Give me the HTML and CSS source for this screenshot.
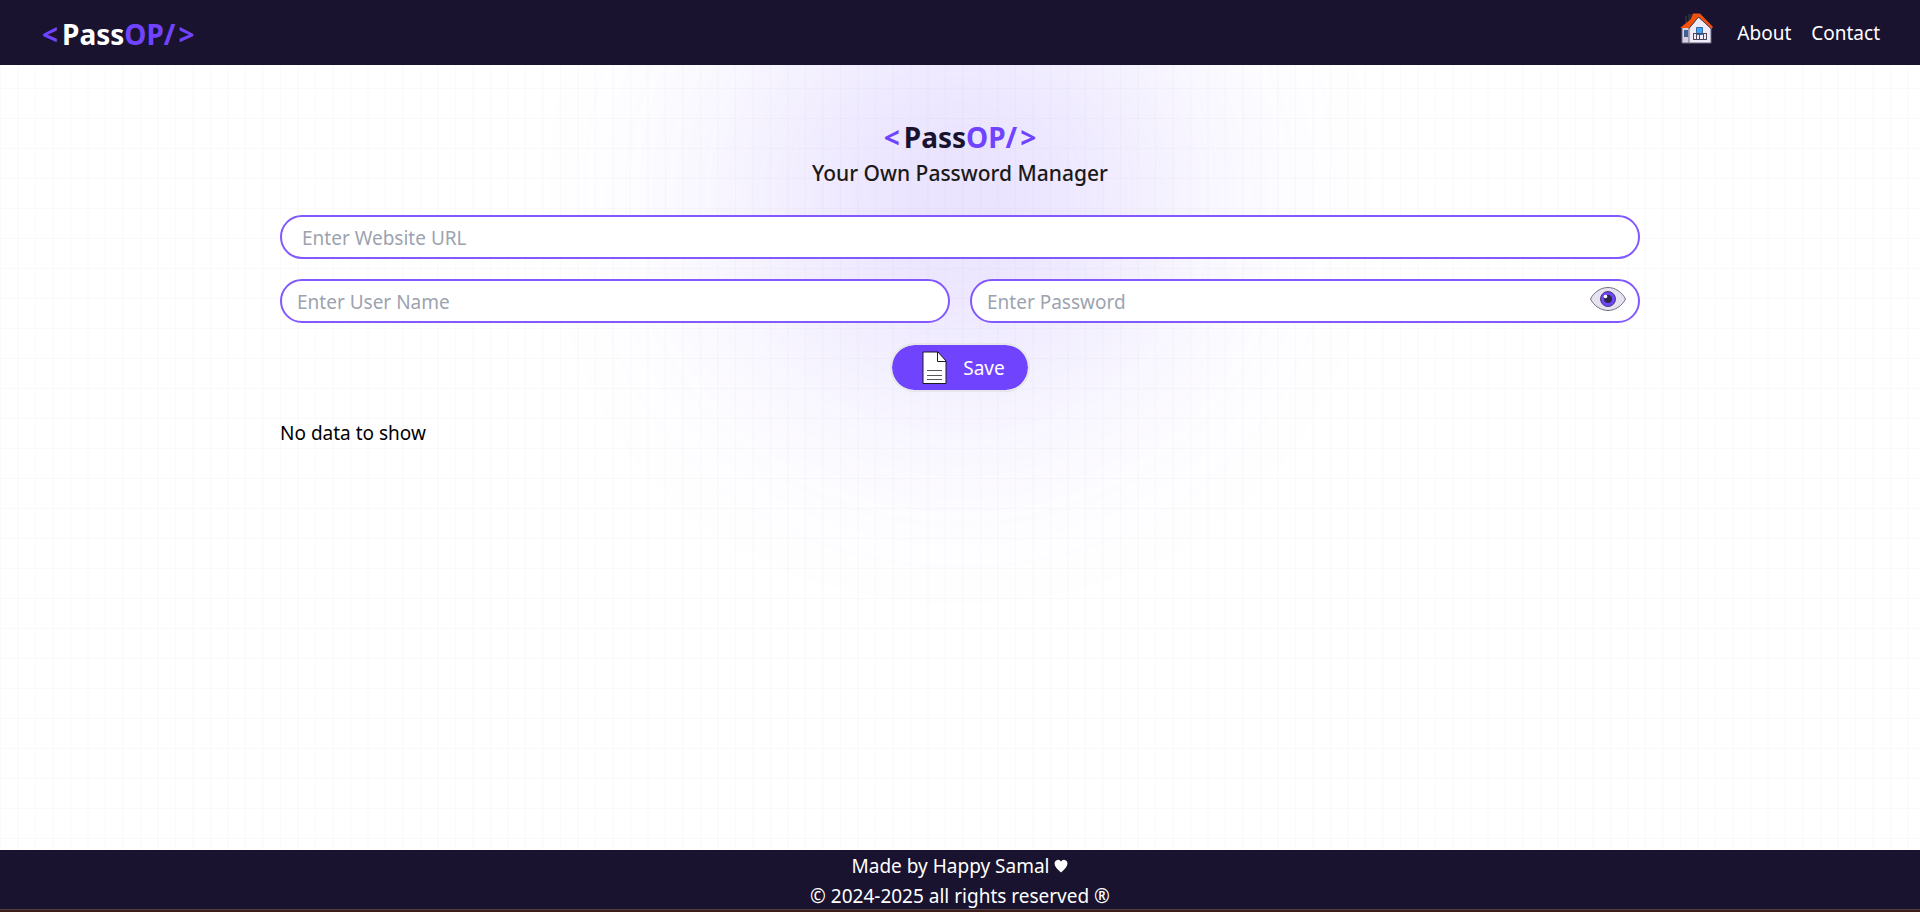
FILE: index.html
```html
<!DOCTYPE html>
<html lang="en">
<head>
<meta charset="utf-8">
<title>PassOP</title>
<link rel="stylesheet" href="styles.css">
</head>
<body>
<div class="page">
  <header class="navbar">
    <a class="logo" href="#"><span class="accent">&lt;</span><span>Pass</span><span class="accent">OP/</span><span class="accent">&gt;</span></a>
    <nav class="links">
      <a class="home" href="#" aria-label="Home">
        <svg width="34" height="32" viewBox="0 0 34 32" aria-hidden="true">
          <path d="M5 3h2v7H5zM8 1h4v6H8z" fill="#2e2939"/>
          <path d="M2 14h8v16H2z" fill="#d5d0e3" stroke="#6d6780"/>
          <path d="M4 17h4v7H4z" fill="#3f6290"/>
          <path d="M9 15 18.500 4 31 15v15H9z" fill="#f0ebf8" stroke="#6d6780"/>
          <path d="M0 15 11 6l2-5.500h7L33 14l-1.500 2L18.500 4 9 15z" fill="#f4510b"/>
          <path d="M9 15.500 18.500 4 31.500 16" stroke="#4b4257" fill="none"/>
          <path d="M16.500 14.500h6v7h-6z" fill="#3ea2fa" stroke="#356aa5"/>
          <path d="M13 20.500h14M13 26.500h14M13.500 20v7M16.500 20v7M19.500 20v7M23.500 20v7M26.500 20v7" stroke="#4d485c" fill="none"/>
        </svg>
      </a>
      <a href="#">About</a>
      <a href="#">Contact</a>
    </nav>
  </header>

  <main class="main">
    <div class="glow-area"><div class="glow"></div></div>
    <div class="content">
      <h1 class="logo title"><span class="accent">&lt;</span><span>Pass</span><span class="accent">OP/</span><span class="accent">&gt;</span></h1>
      <p class="tagline">Your Own Password Manager</p>
      <form class="form">
        <input class="field field-url" type="text" placeholder="Enter Website URL" aria-label="Website URL">
        <div class="row">
          <input class="field" type="text" placeholder="Enter User Name" aria-label="User name">
          <div class="password">
            <input class="field" type="password" placeholder="Enter Password" aria-label="Password">
            <button class="eye" type="button" aria-label="Show password">
              <svg width="38" height="26" viewBox="0 0 38 26" aria-hidden="true">
                <path d="M1.500 13C5 6 12 1.500 19 1.500S33 6 36.500 13C33 20 26 24.500 19 24.500S5 20 1.500 13z" fill="#e7e2f0" stroke="#736e80"/>
                <circle cx="19" cy="13" r="7.500" fill="#7044ff" stroke="#453a70"/>
                <circle cx="19" cy="13" r="4" fill="#2e2747"/>
                <circle cx="16.500" cy="10.500" r="1.800" fill="#fff"/>
              </svg>
            </button>
          </div>
        </div>
        <button class="save" type="button">
          <svg width="26" height="34" viewBox="0 0 26 34" aria-hidden="true">
            <path d="M1 1h15l8 9v22.500H1z" fill="#fff" stroke="#1b1b1f"/>
            <path d="M15.500 1v9.500H24" fill="none" stroke="#1b1b1f"/>
            <path d="M5 19.500h15M5 24.500h15M5 28.500h15" stroke="#55555c"/>
          </svg>
          Save
        </button>
      </form>
      <p class="empty">No data to show</p>
    </div>
  </main>

  <footer class="footer">
    <p>Made by Happy Samal <svg class="heart" width="14" height="14" viewBox="0 0 14 14" role="img" aria-label="love"><path d="M7 13.500C3 10 .5 7.500.5 4.300A3.500 3.500 0 0 1 7 2.500a3.500 3.500 0 0 1 6.500 1.800C13.500 7.500 11 10 7 13.500z" fill="#fff"/></svg></p>
    <p>© 2024-2025 all rights reserved ®</p>
  </footer>
</div>
</body>
</html>
```

FILE: styles.css
```css
* {
  box-sizing: border-box;
}

body {
  margin: 0;
  font-family: "Segoe UI", "Noto Sans", sans-serif;
  font-size: 19px;
  line-height: 30px;
  color: #000;
}

h1,
p {
  margin: 0;
}

a {
  color: inherit;
  text-decoration: none;
}

input,
button {
  font: inherit;
}

svg {
  display: block;
}

.page {
  display: flex;
  flex-direction: column;
  min-height: 100vh;
}

.navbar {
  display: flex;
  align-items: center;
  justify-content: space-between;
  height: 65px;
  padding: 0 40px;
  background: #1a132f;
  color: #fff;
}

.logo {
  display: flex;
  justify-content: center;
  padding: 2px 2px 0;
  font-size: 28px;
  font-weight: 700;
  line-height: 40px;
}

.logo .accent:first-child {
  margin-right: 4px;
}

.logo .accent:last-child {
  margin-left: 3px;
}

.accent {
  color: #7044ff;
}

.links {
  display: flex;
  align-items: center;
  gap: 20px;
}

.home {
  padding: 0 3px 8px 0;
}

.main {
  position: relative;
  flex: 1;
  background-color: #fff;
  background-image:
    linear-gradient(to right, #8080800a 1px, transparent 1px, transparent 17px, #80808006 17px, #80808006 19px, transparent 19px),
    linear-gradient(to bottom, #8080800a 1px, transparent 1px);
  background-size: 35px 100%, 100% 30px;
  background-position: 0 0, 0 23px;
}

.glow-area {
  position: absolute;
  inset: 0;
  overflow: hidden;
}

.glow {
  width: 388px;
  height: 388px;
  margin: -67px auto 0;
  border-radius: 50%;
  background: #7044ff;
  opacity: 0.2;
  filter: blur(125px);
}

.content {
  position: relative;
  max-width: 1400px;
  margin: 0 auto;
  padding: 50px 20px;
}

.title {
  color: #1a132f;
}

.tagline {
  font-size: 21px;
  font-weight: 500;
  line-height: 33px;
  color: #1c1917;
  text-align: center;
}

.form {
  display: flex;
  flex-direction: column;
  align-items: center;
  gap: 20px;
  padding-top: 25px;
}

.field {
  display: block;
  width: 100%;
  height: 44px;
  padding: 2px 15px 0;
  border: 2px solid #8258ff;
  border-radius: 22px;
  background: #fff;
  outline: 0;
}

.field::placeholder {
  color: #9ca3af;
  opacity: 1;
}

.field-url {
  padding-left: 20px;
}

.row {
  display: grid;
  grid-template-columns: 1fr 1fr;
  gap: 20px;
  width: 100%;
}

.password {
  position: relative;
}

.eye {
  position: absolute;
  top: 7px;
  right: 13px;
  padding: 0;
  border: 0;
  background: none;
}

.save {
  display: flex;
  align-items: center;
  gap: 15px;
  height: 49px;
  padding: 1px 23px 0 30px;
  border: 2px solid #e5e7eb;
  border-radius: 25px;
  background: #7044ff;
  background-clip: padding-box;
  color: #fff;
}

.empty {
  padding-top: 26px;
}

.footer {
  padding: 1px 0;
  background: #1a132f;
  box-shadow: inset 0 -1px #3a1d18, inset 0 -2px #3a1d18, inset 0 -3px #51413f;
  color: #fff;
  text-align: center;
}

.heart {
  display: inline-block;
}
```
